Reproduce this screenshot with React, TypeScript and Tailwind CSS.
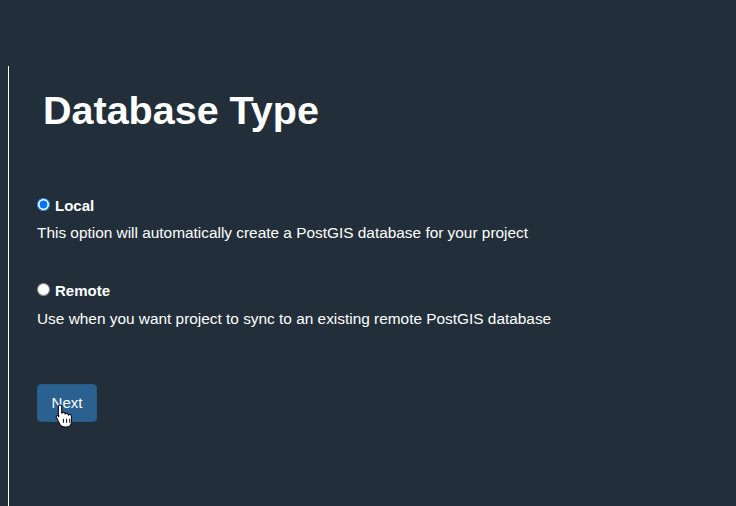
import React from 'react';

function HandCursor() {
  return (
    <svg width="19" height="25" viewBox="0 0 17 22" className="absolute left-[17px] top-[18px]">
      <path
        d="M4.5 1.5c.8 0 1.5.7 1.5 1.5v6.2c.2-.7.8-1.2 1.5-1.2.8 0 1.5.7 1.5 1.5v.5c.2-.6.8-1 1.4-1 .8 0 1.5.7 1.5 1.5v.6c.2-.5.7-.9 1.3-.9.8 0 1.5.7 1.5 1.5v4.8c0 2.8-2 4.8-4.8 4.8H8.4c-1.6 0-2.9-.8-3.8-2.1L1.3 13.1c-.5-.7-.3-1.6.4-2 .6-.4 1.4-.3 1.9.3L3 12V3c0-.8.7-1.5 1.5-1.5z"
        fill="#fff"
        stroke="#000"
        strokeWidth="0.9"
      />
      <path d="M7.5 14v3.5M10.4 14v3.5M13.2 14v3.5" stroke="#000" strokeWidth="0.9" />
    </svg>
  );
}

export default function App() {
  return (
    <div className="w-[736px] h-[506px] bg-[#222f3b] overflow-hidden font-['Liberation_Sans',Arial,sans-serif] text-white">
      <div className="ml-[8px] mt-[66px] h-[440px] border-l border-white pl-[28px]">
        <h1 className="pl-[6px] pt-[20px] text-[39.5px] font-bold leading-[48px]">Database Type</h1>

        <div className="mt-[63px]">
          <label className="flex items-start gap-[5px]">
            <input type="radio" name="db" defaultChecked className="mt-[1px] w-[13px] h-[13px] accent-[#0075ff]" />
            <span className="text-[15px] font-bold leading-[18px]">Local</span>
          </label>
          <p className="mt-[9px] text-[15.4px] leading-[18px]">
            This option will automatically create a PostGIS database for your project
          </p>
        </div>

        <div className="mt-[40px]">
          <label className="flex items-start gap-[5px]">
            <input type="radio" name="db" className="mt-[1px] w-[13px] h-[13px]" />
            <span className="text-[15px] font-bold leading-[18px]">Remote</span>
          </label>
          <p className="mt-[10px] text-[15.4px] leading-[18px]">
            Use when you want project to sync to an existing remote PostGIS database
          </p>
        </div>

        <button className="relative mt-[56px] w-[60px] h-[38px] rounded-[4px] bg-[#2b6190] border border-[#285a86] text-[15px] text-white">
          Next
          <HandCursor />
        </button>
      </div>
    </div>
  );
}
